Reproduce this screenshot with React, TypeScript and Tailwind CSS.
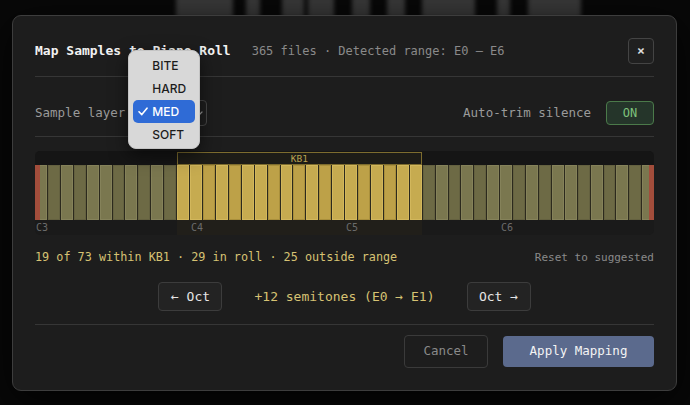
import React from 'react';

const BLACK = [1, 3, 6, 8, 10];
const KB_START = 11;
const KB_END = 29;

const backdropKeys: [number, number][] = [
  [176, 57], [246, 14], [282, 22], [308, 26], [352, 18], [387, 18], [422, 53], [497, 13], [528, 53],
];

const Key: React.FC<{ index: number }> = ({ index }) => {
  const inKb = index >= KB_START && index <= KB_END;
  const black = BLACK.includes(index % 12);
  const tone = inKb
    ? black
      ? 'bg-[#bda148] shadow-[inset_0_0_0_1px_#a98f3c]'
      : 'bg-[#c6ab50] shadow-[inset_0_0_0_1px_#d2b75c]'
    : black
      ? 'bg-[#6d6a45] shadow-[inset_0_0_0_1px_#646140]'
      : 'bg-[#7a774f] shadow-[inset_0_0_0_1px_#85825a]';
  return (
    <div className={`relative flex-1 ${tone}`}>
      {index === 0 && <div className="absolute inset-y-0 left-0 w-[5px] bg-[#a24d3b]"></div>}
      {index === 47 && <div className="absolute inset-y-0 right-0 w-[5px] bg-[#a24d3b]"></div>}
    </div>
  );
};

const Keyboard: React.FC = () => {
  return (
    <div className="mt-[14px] grid grid-cols-[repeat(48,minmax(0,1fr))] grid-rows-[14px_55px_15px] gap-x-px rounded-[5px] overflow-hidden bg-[#1a1a1a]">
      <div className="col-[1/49] row-start-1 bg-[#151515]"></div>
      <div className="col-[12/31] row-start-1 mt-px border border-[#7d6c2e] bg-[#1d1c17] text-center text-[9.5px] leading-[12px] text-[#b7a152]">
        KB1
      </div>

      <div className="col-[1/49] row-start-2 flex gap-px bg-[#2c2a1d]">
        {Array.from({ length: 48 }, (_, i) => (
          <Key key={i} index={i} />
        ))}
      </div>

      <div className="col-[12/31] row-start-3 bg-[#211f1a]"></div>
      <div className="col-[1/4] row-start-3 pl-px text-[10px] leading-[16px] text-[#6b6b6b]">C3</div>
      <div className="col-[13/16] row-start-3 pl-px text-[10px] leading-[16px] text-[#6b6b6b]">C4</div>
      <div className="col-[25/28] row-start-3 pl-px text-[10px] leading-[16px] text-[#6b6b6b]">C5</div>
      <div className="col-[37/40] row-start-3 pl-px text-[10px] leading-[16px] text-[#6b6b6b]">C6</div>
    </div>
  );
};

const LayerMenu: React.FC = () => {
  const items = ['BITE', 'HARD', 'MED', 'SOFT'];
  return (
    <div className="absolute left-[-5px] top-[-50px] z-10 w-[72px] rounded-[8px] border border-[#c4c4c4] bg-[#d8d8d8] px-[4px] pt-[3px] pb-[2px] shadow-[0_6px_18px_rgba(0,0,0,0.55)] font-['Inter',sans-serif]">
      {items.map((item) => {
        const active = item === 'MED';
        return (
          <div
            key={item}
            className={`relative flex h-[23px] items-center rounded-[5px] pl-[19px] text-[12px] font-medium ${
              active ? 'bg-[#2f6bd6] text-white' : 'text-[#1c1c1c]'
            }`}
          >
            {active && (
              <svg className="absolute left-[5px] top-[7px]" width="10" height="9" viewBox="0 0 10 9" fill="none">
                <path d="M1 4.8 L3.8 7.6 L9 1.2" stroke="white" strokeWidth="1.6" strokeLinecap="round" strokeLinejoin="round" />
              </svg>
            )}
            {item}
          </div>
        );
      })}
    </div>
  );
};

const App: React.FC = () => {
  return (
    <div className="relative min-h-[405px] overflow-hidden bg-[#080808] pt-[15px] pl-[12px] font-['DejaVu_Sans_Mono','Liberation_Mono',monospace]">
      <div className="absolute inset-x-0 top-0 h-[24px] blur-[2px]">
        {backdropKeys.map(([left, width]) => (
          <div key={left} className="absolute top-[-4px] h-[22px] bg-[#3a3a3a]" style={{ left, width }}></div>
        ))}
      </div>

      <div className="relative w-[665px] rounded-[9px] border border-[#3d3d3d] bg-[#1d1d1d] px-[22px] pt-[22px] pb-[22px] shadow-[0_10px_40px_rgba(0,0,0,0.8)]">
        <div className="flex h-[26px] items-center">
          <h2 className="text-[13px] font-bold text-[#f2f2f2]">Map Samples to Piano Roll</h2>
          <span className="ml-[21px] text-[12px] text-[#8a8a8a]">365 files · Detected range: E0 — E6</span>
          <button className="ml-auto flex h-[26px] w-[26px] items-center justify-center rounded-[4px] border border-[#444] bg-[#202020] text-[13px] font-bold text-[#dddddd]">
            ×
          </button>
        </div>

        <div className="mt-[12px] h-px bg-[#363636]"></div>

        <div className="mt-[23px] flex h-[26px] items-center">
          <span className="text-[12.5px] text-[#9a9a9a]">Sample layer</span>
          <div className="relative ml-[8px]">
            <div className="flex h-[26px] w-[74px] items-center justify-end rounded-[4px] border border-[#484848] bg-[#1f1f1f] pr-[3px]">
              <svg width="8" height="5" viewBox="0 0 8 5" fill="none">
                <path d="M1 1 L4 4 L7 1" stroke="#9a9a9a" strokeWidth="1.2" strokeLinecap="round" strokeLinejoin="round" />
              </svg>
            </div>
            <LayerMenu />
          </div>
          <span className="ml-auto text-[12.5px] text-[#9a9a9a]">Auto-trim silence</span>
          <button className="ml-[15px] h-[24px] w-[48px] rounded-[4px] border border-[#4b7a4a] bg-[#25352a] text-[12px] text-[#7fc27c]">
            ON
          </button>
        </div>

        <div className="mt-[10px] h-px bg-[#363636]"></div>

        <Keyboard />

        <div className="mt-[15px] flex h-[16px] items-center justify-between">
          <span className="text-[11.8px] text-[#d6c273]">19 of 73 within KB1 · 29 in roll · 25 outside range</span>
          <button className="text-[11px] text-[#8a8a8a]">Reset to suggested</button>
        </div>

        <div className="mt-[16px] flex items-center justify-center gap-8">
          <button className="h-[29px] w-[64px] rounded-[4px] border border-[#3c3c3c] bg-[#232323] text-[13px] text-[#e6e6e6]">
            ← Oct
          </button>
          <span className="text-[13px] text-[#d6c273]">+12 semitones (E0 → E1)</span>
          <button className="h-[29px] w-[64px] rounded-[4px] border border-[#3c3c3c] bg-[#232323] text-[13px] text-[#e6e6e6]">
            Oct →
          </button>
        </div>

        <div className="mt-[13px] h-px bg-[#363636]"></div>

        <div className="mt-[10px] flex items-center justify-end gap-[15px]">
          <button className="h-[33px] w-[84px] rounded-[4px] border border-[#3a3a3a] bg-[#1d1d1d] text-[12.5px] text-[#8a8a8a]">
            Cancel
          </button>
          <button className="h-[31px] w-[151px] rounded-[4px] bg-[#5b6a8d] text-[12.5px] font-medium text-[#f4f4f4]">
            Apply Mapping
          </button>
        </div>
      </div>
    </div>
  );
};

export default App;
